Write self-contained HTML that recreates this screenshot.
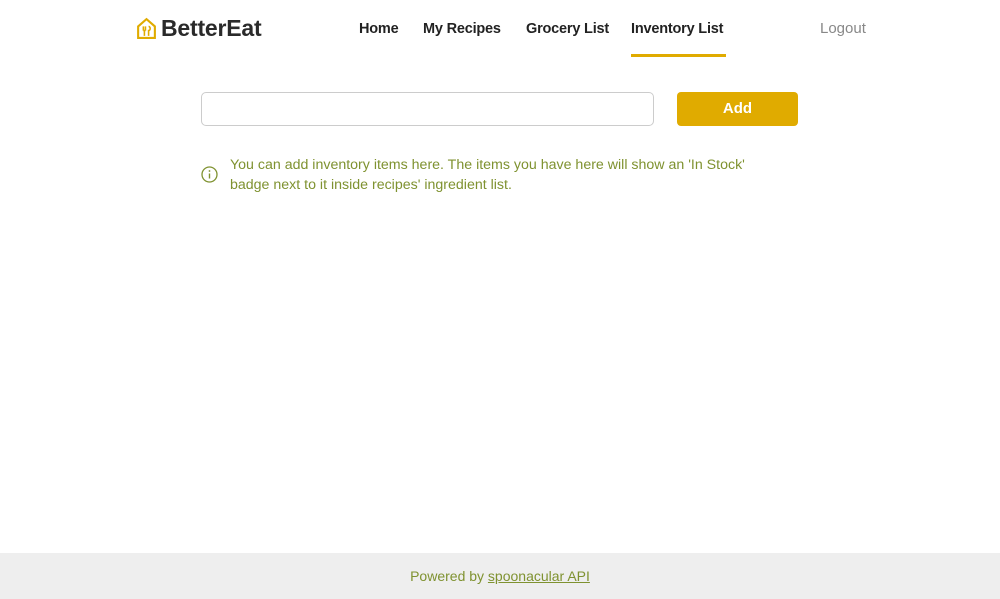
<!DOCTYPE html>
<html><head><style>
body{margin:0;width:1000px;height:599px;background:#fff;font-family:"Liberation Sans",sans-serif;position:relative;overflow:hidden}
.logo{position:absolute;left:136px;top:15px;display:flex;align-items:center;gap:4px}
.logo span{font-size:23px;font-weight:bold;color:#2a2a2a;letter-spacing:-0.2px}
.nav a{position:absolute;top:21px;font-size:14.5px;font-weight:bold;color:#222;text-decoration:none;white-space:nowrap;letter-spacing:-0.2px}
.ul{position:absolute;left:631px;top:54px;width:95px;height:3px;background:#e0ab00}
.logout{position:absolute;left:820px;top:20px;font-size:15px;color:#888}
.inp{position:absolute;left:201px;top:92px;width:451px;height:32px;border:1px solid #ccc;border-radius:5px}
.btn{position:absolute;left:677px;top:92px;width:121px;height:34px;background:#e0ab00;border-radius:4px;color:#fff;font-weight:bold;font-size:15px;text-align:center;line-height:34px}
.info{position:absolute;left:230px;top:155px;font-size:14.2px;line-height:20px;color:#7f9230;width:540px}
.ic{position:absolute;left:201px;top:166px}
.foot{position:absolute;left:0;top:553px;width:1000px;height:46px;background:#eee;text-align:center;line-height:46px;font-size:14px;color:#7f9230}
.foot u{color:#7f9230}
</style></head><body>
<div class="logo"><svg width="21" height="23" viewBox="0 0 20 22"><path d="M2 9 L10 2 L18 9 V20 H2 Z" fill="none" stroke="#e0ab00" stroke-width="2"/><path d="M7 9v4M9 9v4M7 13h2M8 13v5M12 9c2 0 2 4 0 4v5" stroke="#e0ab00" stroke-width="1.5" fill="none"/></svg><span>BetterEat</span></div>
<div class="nav"><a style="left:359px">Home</a><a style="left:423px">My Recipes</a><a style="left:526px">Grocery List</a><a style="left:631px">Inventory List</a></div>
<div class="ul"></div>
<div class="logout">Logout</div>
<div class="inp"></div>
<div class="btn">Add</div>
<svg class="ic" width="17" height="17" viewBox="0 0 17 17"><circle cx="8.5" cy="8.5" r="7.5" fill="none" stroke="#7f9230" stroke-width="1.3"/><path d="M8.5 7.5v5" stroke="#7f9230" stroke-width="1.4"/><circle cx="8.5" cy="5" r="0.9" fill="#7f9230"/></svg>
<div class="info">You can add inventory items here. The items you have here will show an 'In Stock' badge next to it inside recipes' ingredient list.</div>
<div class="foot">Powered by <u>spoonacular API</u></div>
</body></html>
